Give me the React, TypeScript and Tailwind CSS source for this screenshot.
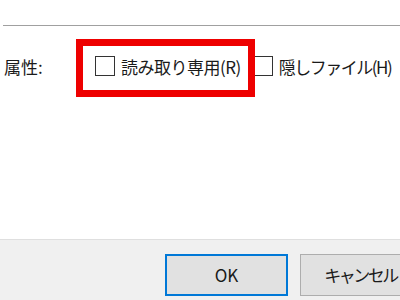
import React from "react";

export default function App() {
  const font = { fontFamily: '"Noto Sans CJK JP", "Noto Sans", sans-serif' };
  return (
    <div
      className="relative w-[400px] h-[300px] overflow-hidden flex flex-col bg-white text-[#1a1a1a]"
      style={font}
    >
      <div className="flex-1 bg-white">
        <div className="mt-[25px] ml-[3px] h-px bg-[#a0a0a0]" />
        <div className="mt-[30px] flex items-center h-[20px]">
          <div className="w-[95px] pl-[4px] text-[17px] leading-none">属性:</div>
          <div className="w-[20px] h-[20px] border border-[#333] bg-white shrink-0" />
          <div className="ml-[6px] text-[17px] leading-none whitespace-nowrap tracking-[-0.5px]">
            読み取り専用(R)
          </div>
          <div className="ml-[12px] w-[20px] h-[20px] border border-[#333] bg-white shrink-0" />
          <div className="ml-[6px] text-[17px] leading-none whitespace-nowrap tracking-[-1.5px]">
            隠しファイル(H)
          </div>
        </div>
      </div>
      <div className="h-[61px] bg-[#f0f0f0] border-t border-[#dfdfdf] flex items-start pt-[14px] pl-[165px] gap-[12px]">
        <button className="w-[123px] h-[42px] shrink-0 bg-[#e1e1e1] border-2 border-[#0078d7] text-[17px] flex items-center justify-center">
          OK
        </button>
        <button className="w-[123px] h-[42px] shrink-0 bg-[#e1e1e1] border border-[#adadad] text-[17px] flex items-center justify-center pr-[2px]">
          <span className="tracking-[-2.5px]">キャンセル</span>
        </button>
      </div>
      <div className="absolute left-[76px] top-[39px] w-[179px] h-[58px] border-[7px] border-[#ee0000] pointer-events-none" />
    </div>
  );
}
